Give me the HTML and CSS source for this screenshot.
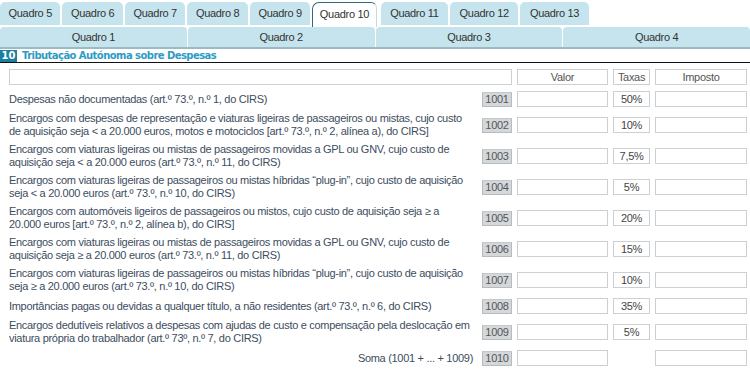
FILE: index.html
```html
<!DOCTYPE html>
<html>
<head>
  <meta charset="utf-8">
  <title>Quadro 10 - Tributação Autónoma</title>
  <link rel="stylesheet" href="styles.css">
</head>
<body>

  <!-- Tabs: row with individual quadros -->
  <div class="tabs tabs-top">
    <div class="tab">Quadro 5</div>
    <div class="tab">Quadro 6</div>
    <div class="tab">Quadro 7</div>
    <div class="tab">Quadro 8</div>
    <div class="tab">Quadro 9</div>
    <div class="tab active">Quadro 10</div>
    <div class="tab wide">Quadro 11</div>
    <div class="tab wide">Quadro 12</div>
    <div class="tab wide">Quadro 13</div>
  </div>

  <!-- Tabs: wide row -->
  <div class="tabs tabs-main">
    <div class="tab">Quadro 1</div>
    <div class="tab">Quadro 2</div>
    <div class="tab">Quadro 3</div>
    <div class="tab">Quadro 4</div>
  </div>

  <!-- Section title -->
  <div class="section-title">
    <span class="section-num">10</span>
    <span class="section-name">Tributação Autónoma sobre Despesas</span>
  </div>

  <div class="quadro">
    <div class="row head">
      <div class="box span2"></div>
      <div class="box">Valor</div>
      <div class="box">Taxas</div>
      <div class="box">Imposto</div>
    </div>

    <div class="row">
      <div class="label">Despesas não documentadas (art.º 73.º, n.º 1, do CIRS)</div>
      <div class="code">1001</div>
      <div class="box"></div>
      <div class="box">50%</div>
      <div class="box"></div>
    </div>

    <div class="row">
      <div class="label">Encargos com despesas de representação e viaturas ligeiras de passageiros ou mistas, cujo custo de aquisição seja &lt; a 20.000 euros, motos e motociclos [art.º 73.º, n.º 2, alínea a), do CIRS]</div>
      <div class="code">1002</div>
      <div class="box"></div>
      <div class="box">10%</div>
      <div class="box"></div>
    </div>

    <div class="row">
      <div class="label">Encargos com viaturas ligeiras ou mistas de passageiros movidas a GPL ou GNV, cujo custo de aquisição seja &lt; a 20.000 euros (art.º 73.º, n.º 11, do CIRS)</div>
      <div class="code">1003</div>
      <div class="box"></div>
      <div class="box">7,5%</div>
      <div class="box"></div>
    </div>

    <div class="row">
      <div class="label">Encargos com viaturas ligeiras de passageiros ou mistas híbridas “plug-in”, cujo custo de aquisição seja &lt; a 20.000 euros (art.º 73.º, n.º 10, do CIRS)</div>
      <div class="code">1004</div>
      <div class="box"></div>
      <div class="box">5%</div>
      <div class="box"></div>
    </div>

    <div class="row">
      <div class="label">Encargos com automóveis ligeiros de passageiros ou mistos, cujo custo de aquisição seja ≥ a 20.000 euros [art.º 73.º, n.º 2, alínea b), do CIRS]</div>
      <div class="code">1005</div>
      <div class="box"></div>
      <div class="box">20%</div>
      <div class="box"></div>
    </div>

    <div class="row">
      <div class="label">Encargos com viaturas ligeiras ou mistas de passageiros movidas a GPL ou GNV, cujo custo de aquisição seja ≥ a 20.000 euros (art.º 73.º, n.º 11, do CIRS)</div>
      <div class="code">1006</div>
      <div class="box"></div>
      <div class="box">15%</div>
      <div class="box"></div>
    </div>

    <div class="row">
      <div class="label">Encargos com viaturas ligeiras de passageiros ou mistas híbridas “plug-in”, cujo custo de aquisição seja ≥ a 20.000 euros (art.º 73.º, n.º 10, do CIRS)</div>
      <div class="code">1007</div>
      <div class="box"></div>
      <div class="box">10%</div>
      <div class="box"></div>
    </div>

    <div class="row">
      <div class="label">Importâncias pagas ou devidas a qualquer título, a não residentes (art.º 73.º, n.º 6, do CIRS)</div>
      <div class="code">1008</div>
      <div class="box"></div>
      <div class="box">35%</div>
      <div class="box"></div>
    </div>

    <div class="row">
      <div class="label">Encargos dedutíveis relativos a despesas com ajudas de custo e compensação pela deslocação em viatura própria do trabalhador (art.º 73º, n.º 7, do CIRS)</div>
      <div class="code">1009</div>
      <div class="box"></div>
      <div class="box">5%</div>
      <div class="box"></div>
    </div>

    <div class="row">
      <div class="label total">Soma (1001 + ... + 1009)</div>
      <div class="code">1010</div>
      <div class="box"></div>
      <div></div>
      <div class="box"></div>
    </div>
  </div>

</body>
</html>
```

FILE: styles.css
```css
* {
  box-sizing: border-box;
  margin: 0;
  padding: 0;
}

body {
  font-family: "Liberation Sans", Arial, sans-serif;
  font-size: 11px;
  letter-spacing: -0.3px;
  color: #3c4d5e;
  background: #fff;
  width: 750px;
  overflow: hidden;
}

/* Tabs */
.tabs {
  display: flex;
}

.tabs-top {
  padding-top: 2px;
  gap: 2px;
}

.tabs-top .tab {
  height: 23px;
  line-height: 23px;
  padding: 0 8.5px;
  border-radius: 5px 5px 0 0;
}

.tabs-top .tab.wide {
  padding: 0 9.5px;
}

.tabs-top .tab.active {
  padding: 0 6.5px;
  margin-right: 2px;
}

.tab {
  background: #c6e4ed;
  color: #333;
  text-align: center;
  white-space: nowrap;
}

.tab.active {
  background: #fff;
  border-top: 1px solid #2f6b7c;
  border-left: 1px solid #2f6b7c;
  border-right: 1px solid #c9d9de;
  border-radius: 7px 6px 0 0;
  height: 25px;
  margin-bottom: -2px;
  line-height: 22px;
  position: relative;
}

.tabs-main {
  margin-top: 2px;
  gap: 1px;
  border-bottom: 2px solid #9bbac4;
}

.tabs-main .tab {
  flex: 1;
  height: 20px;
  line-height: 20px;
  border-radius: 4px 4px 0 0;
}

/* Section title */
.section-title {
  display: flex;
  align-items: center;
  gap: 5px;
  height: 14px;
  border-bottom: 1px solid #111;
  font-family: "DejaVu Sans", Verdana, sans-serif;
  font-weight: bold;
  font-size: 10px;
  letter-spacing: 0;
}

.section-num {
  background: #1c7f9e;
  color: #fff;
  width: 17px;
  height: 12px;
  line-height: 12px;
  text-align: center;
}

.section-name {
  color: #2c9cc4;
  letter-spacing: -0.55px;
}

/* Quadro table */
.quadro {
  padding: 5px 3px 0 9px;
}

.row {
  display: grid;
  grid-template-columns: 1fr 30px 91px 37px 92px;
  column-gap: 5px;
  align-items: center;
  padding: 2px 0 3px;
  min-height: 21px;
}

.row.head {
  padding: 0 0 4px;
}

.box {
  height: 16px;
  line-height: 14px;
  border: 1px solid #cdd0d2;
  background: #fff;
  text-align: center;
  color: #444;
}

.row.head .box {
  color: #555;
}

.span2 {
  grid-column: span 2;
}

.label {
  line-height: 13px;
  padding-right: 4px;
}

.label.total {
  text-align: right;
}

.code {
  height: 15px;
  line-height: 13px;
  background: #d4d8db;
  border: 1px solid #b6bbbe;
  border-top-color: #c4c8cb;
  color: #555;
  text-align: center;
}
```
